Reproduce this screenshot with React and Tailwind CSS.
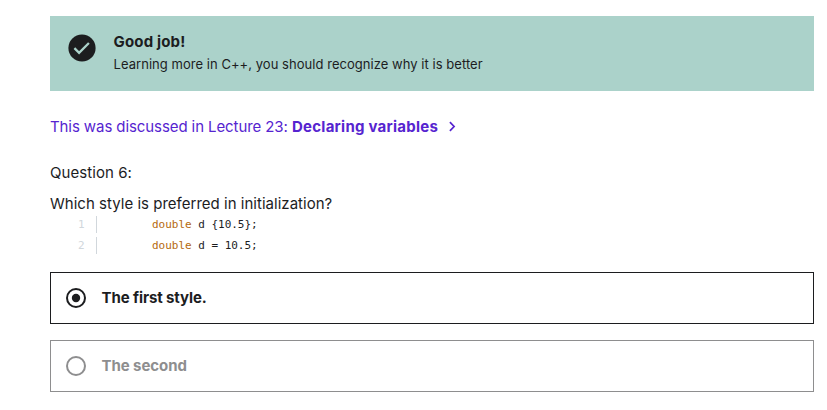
function Radio({ selected }) {
  return (
    <svg className="h-5 w-5 shrink-0" viewBox="0 0 20 20" fill="none">
      <circle cx="10" cy="10" r="9" stroke="currentColor" strokeWidth="2" />
      {selected && <circle cx="10" cy="10" r="4.2" fill="currentColor" />}
    </svg>
  );
}

function CodeLine({ number, children }) {
  return (
    <div className="flex h-[21px] items-start">
      <span className="w-[46px] pl-7 leading-[17px] text-[#d1d7dc]">{number}</span>
      <span className="mr-[55px] h-[17px] w-px bg-[#d1d7dc]" />
      <code className="whitespace-pre font-['DejaVu_Sans_Mono',monospace] leading-[17px] tracking-[-0.02px]">
        <span className="text-[#b4690e]">double</span>
        {children}
      </code>
    </div>
  );
}

export default function App() {
  return (
    <main className="h-[410px] w-[827px] overflow-hidden bg-white pl-[50px] pr-[13px] pt-4 font-['Inter',sans-serif] text-base text-[#1c1d1f]">
      <section className="flex h-[75px] items-start bg-[#abd2ca] pl-[18px] pt-[18px]">
        <svg className="h-7 w-7 shrink-0" viewBox="0 0 28 28" fill="none">
          <circle cx="14" cy="14" r="13.6" fill="#1c1d1f" />
          <path d="M6.4 14.1l4.7 4.7 9.8-9.8" stroke="#abd2ca" strokeWidth="2.3" />
        </svg>
        <div className="-mt-[2px] ml-[17.6px] whitespace-nowrap">
          <h2 className="h-5 w-fit text-[15px] font-bold leading-5 tracking-[0.15px]">Good job!</h2>
          <p className="mt-[2px] h-5 w-fit text-[13px] leading-5 tracking-[0.04px]">
            Learning more in C++, you should recognize why it is better
          </p>
        </div>
      </section>

      <a className="mt-6 flex h-6 items-center whitespace-nowrap text-[15px] text-[#5624d0]">
        <span className="w-[242px] tracking-[-0.09px]">This was discussed in Lecture 23:</span>
        <span className="w-[146px] font-bold tracking-[0.25px]">Declaring variables</span>
        <svg className="ml-[9px] h-3 w-3" viewBox="0 0 12 12" fill="none">
          <path d="M2.9 1.2l4.2 4.3-4.2 4.3" stroke="currentColor" strokeWidth="1.7" />
        </svg>
      </a>

      <p className="mt-[22px] h-6 w-fit text-[15px] leading-6 tracking-[0.06px]">Question 6:</p>
      <p className="mt-[7px] h-6 w-fit whitespace-nowrap text-[15px] leading-6 tracking-[0.02px]">
        Which style is preferred in initialization?
      </p>
      <div className="font-['DejaVu_Sans_Mono',monospace] text-[11px]">
        <CodeLine number="1">{" d {10.5};"}</CodeLine>
        <CodeLine number="2">{" d = 10.5;"}</CodeLine>
      </div>

      <div className="mt-[14px] flex flex-col gap-4">
        <label className="flex h-[52px] items-center gap-[15.5px] border border-[#1c1d1f] pl-[15px]">
          <Radio selected />
          <span className="text-[15px] font-bold tracking-[-0.1px]">The first style.</span>
        </label>
        <label className="flex h-[52px] items-center gap-[15.5px] border border-[#8e8e8f] pl-[15px] text-[#8e8e8f]">
          <Radio />
          <span className="text-[15px] font-bold tracking-[-0.06px]">The second</span>
        </label>
      </div>
    </main>
  );
}
